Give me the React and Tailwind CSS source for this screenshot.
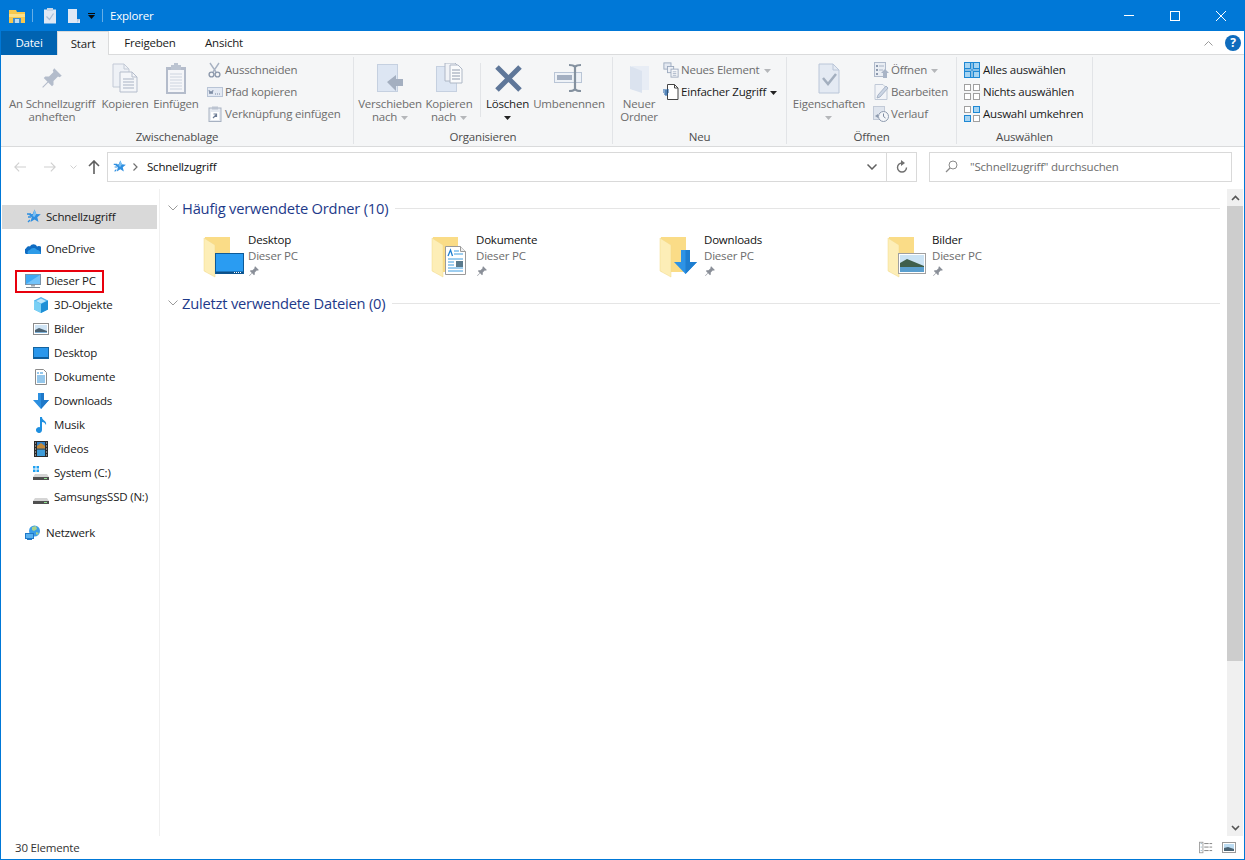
import React from "react";

const C = ({ w = 16, h = 16, vb, className = "", children }) => (
  <svg width={w} height={h} viewBox={vb || `0 0 ${w} ${h}`} className={`shrink-0 ${className}`}>{children}</svg>
);

const Caret = ({ dark, bare }) => (
  <svg width="7" height="4" viewBox="0 0 7 4" className={`inline-block align-middle ${bare ? "" : "ml-1"}`}><path d="M0 0h7L3.500 4z" fill={dark ? "#222" : "#b5b7ba"} /></svg>
);

const Pin = ({ s = 32, c = "#b3bccb", className = "" }) => (
  <svg width={s} height={s} viewBox="0 0 32 32" className={`shrink-0 ${className}`}>
    <path d="M19 3l10 10-3 2-2-1-6 6 0 5-2 2-5-5-7 7-1-1 7-7-5-5 2-2 5 0 6-6-1-2z" fill={c} />
  </svg>
);

const CopyIcon = () => (
  <C w={32} h={32}>
    <path d="M4 1h11l5 5v18H4z" fill="#eef1f6" stroke="#c3cad6" />
    <path d="M15 1v5h5" fill="none" stroke="#c3cad6" />
    <path d="M11 9h12l5 5v15H11z" fill="#f4f6f9" stroke="#b5bdcc" />
    <path d="M23 9v5h5" fill="none" stroke="#b5bdcc" />
    <path d="M14 16h11M14 19h11M14 22h11M14 25h11" stroke="#a9b3c4" />
  </C>
);

const PasteIcon = () => (
  <C w={32} h={32}>
    <rect x="6" y="4" width="20" height="27" fill="#b4bccb" />
    <rect x="8" y="7" width="16" height="22" fill="#f5f6f9" />
    <rect x="11" y="2" width="10" height="5" fill="#bcc4d1" />
    <rect x="14" y="0" width="4" height="3" fill="#bcc4d1" />
    <path d="M10 11h12M10 14h12M10 17h12M10 20h12M10 23h12M10 26h12" stroke="#cdd4df" />
  </C>
);

const Scissors = () => (
  <C>
    <path d="M3 1l6 9M12 1l-6 9" stroke="#a8b2c2" strokeWidth="1.400" fill="none" />
    <circle cx="4.500" cy="12.500" r="2.400" fill="none" stroke="#8d99ac" strokeWidth="1.400" />
    <circle cx="10.500" cy="12.500" r="2.400" fill="none" stroke="#8d99ac" strokeWidth="1.400" />
  </C>
);

const PathIcon = () => (
  <C>
    <rect x="0.500" y="3.500" width="15" height="9" fill="#e3e9f3" stroke="#b8c4d6" />
    <path d="M2 6l1 4 1-3 1 3 1-4" stroke="#7c8ba3" fill="none" />
    <path d="M8 10h1M10 10h1M12 10h1" stroke="#7c8ba3" />
  </C>
);

const ShortcutIcon = () => (
  <C>
    <rect x="2" y="2" width="12" height="13.500" fill="#e6eaf1" stroke="#a7b1c1" />
    <rect x="5" y="0.500" width="6" height="3" fill="#bcc4d1" />
    <rect x="4" y="6" width="8" height="8" fill="#fff" />
    <path d="M6 12l3-3M6.500 8h3v3" stroke="#6d7c95" strokeWidth="1.200" fill="none" />
  </C>
);

const MoveIcon = () => (
  <C w={32} h={32}>
    <rect x="3.500" y="1.500" width="20" height="27" fill="#dde6f3" stroke="#c5d0e0" />
    <path d="M13 19l9-7v4h7v7h-7v5z" fill="#a4afc0" />
  </C>
);

const CopyToIcon = () => (
  <C w={32} h={32}>
    <rect x="3.500" y="3.500" width="20" height="25" fill="#dde6f3" stroke="#c5d0e0" />
    <path d="M12 0h10l5 5v13H12z" fill="#f1f3f7" stroke="#aeb7c6" />
    <path d="M17 2h8l4 4v14H17z" fill="#fafbfc" stroke="#aeb7c6" />
    <path d="M19 7h8M19 10h8M19 13h8M19 16h8" stroke="#8f9aad" />
  </C>
);

const DeleteX = () => (
  <C w={32} h={32}>
    <path d="M5 4l23 23M28 4L5 27" stroke="#5f7799" strokeWidth="5" fill="none" />
  </C>
);

const RenameIcon = () => (
  <C w={32} h={32}>
    <rect x="1.500" y="9.500" width="27" height="10" fill="#eef2f7" stroke="#b9c5d6" />
    <rect x="4" y="12" width="15" height="5" fill="#a3afc1" />
    <path d="M16 2c5 0 5 1 6 2 1-1 1-2 6-2M22 4v22M16 28c5 0 5-1 6-2 1 1 1 2 6 2" stroke="#84919f" strokeWidth="2.200" fill="none" />
  </C>
);

const NewFolderIcon = () => (
  <C w={32} h={32}>
    <path d="M9 3h17v24H9z" fill="#e8edf5" />
    <path d="M7 3l12 5v22L7 26z" fill="#dbe3ef" />
  </C>
);

const NewItemIcon = () => (
  <C vb="0 0 18 18">
    <rect x="1" y="1" width="8" height="7" fill="#e4e9f1" stroke="#9aa8bd" />
    <rect x="5" y="5" width="7" height="7" fill="#eef1f6" stroke="#9aa8bd" />
    <rect x="9" y="8" width="8" height="9" fill="#f7f8fa" stroke="#9aa8bd" />
    <path d="M11 11h4M11 13h4M11 15h4" stroke="#a9b5c7" />
  </C>
);

const EasyAccess = () => (
  <C>
    <path d="M4.500 0.500h7l3.500 3.500v11.500H4.500z" fill="#fff" stroke="#444" />
    <path d="M11.500 0.500V4H15" fill="none" stroke="#444" />
    <path d="M0 6h6M0 8h6M1 10h4" stroke="#1c5fa5" />
    <path d="M3 6v6" stroke="#1c5fa5" />
  </C>
);

const PropsIcon = () => (
  <C w={32} h={32}>
    <path d="M6 1h14l6 6v23H6z" fill="#e4eaf3" stroke="#bac6d8" />
    <path d="M20 1v6h6" fill="none" stroke="#bac6d8" />
    <path d="M10 15l5 6 8-10" stroke="#a3afbf" strokeWidth="2.500" fill="none" />
  </C>
);

const OpenIcon = () => (
  <C>
    <rect x="1.500" y="0.500" width="11" height="14" fill="#e9edf3" stroke="#b0bacb" />
    <path d="M3 3h2v2H3zM3 7h2v2H3zM3 11h2v2H3z" fill="#8c99ae" />
    <path d="M6 4h5M6 8h4" stroke="#a9b4c6" />
    <path d="M12 7l4 4h-2v5h-4v-5H8z" fill="#a9b4c6" />
  </C>
);

const EditIcon = () => (
  <C>
    <path d="M2 .5h8l4 4v11H2z" fill="#f2f4f8" stroke="#c0c9d7" />
    <path d="M4 14l1-3 8-9 2 2-8 9z" fill="#cbd5e4" stroke="#a9b5c7" />
  </C>
);

const HistoryIcon = () => (
  <C>
    <rect x="0.500" y="0.500" width="11" height="13" fill="#dfe5ee" stroke="#c2cad7" />
    <circle cx="10.500" cy="10.500" r="5" fill="#f4f6f9" stroke="#8d9aae" />
    <path d="M10.500 7.500v3l2 1.500" stroke="#7d8a9f" fill="none" />
    <path d="M2 10l3-2v4z" fill="#8d9aae" />
  </C>
);

const SelGrid = ({ mode }) => {
  const cells = mode === "all" ? [1, 1, 1, 1] : mode === "none" ? [0, 0, 0, 0] : [0, 1, 1, 0];
  return (
    <C>
      {cells.map((on, i) => {
        const x = i % 2 === 0 ? 0 : 9;
        const y = i < 2 ? 0 : 9;
        return <rect key={i} x={x + 0.5} y={y + 0.5} width="6" height="6" fill={on ? "#a6d4f2" : "#fff"} stroke={on ? "#1e88d4" : "#a0a0a0"} />;
      })}
      {mode === "all" && <path d="M0.500 0.500h15v15h-15zM8 0v16M0 8h16" fill="none" stroke="#1e88d4" />}
    </C>
  );
};

const QuickStar = ({ s = 16 }) => (
  <svg width={s} height={s} viewBox="0 0 16 16" className="shrink-0">
    <path d="M9.500 0.500l1.800 4.400 4.500.4-3.500 3 1.200 4.700-4-2.500-4 2.500 1.200-4.700-3.500-3 4.500-.4z" fill="#2f8fe0" />
    <path d="M9.500 0.500l1.800 4.400-1.800 3-2-1z" fill="#7cc0f2" />
    <path d="M2 5h4M3 8h3M5 11l-2 2" stroke="#2f8fe0" strokeWidth="1.400" />
  </svg>
);

const Cloud = () => (
  <C>
    <path d="M1 13a3 3 0 0 1 0-5.500C2 5 4 5 5 5.500 6.500 2.500 10.500 2.500 12 5.500a3.500 3.500 0 0 1 3.500 7.500z" fill="#0f6cc2" />
    <path d="M3 13a2.500 2.500 0 0 1 2-4c1-2 5-3 7 0 2 0 4 2 3.500 4z" fill="#2d9be8" />
  </C>
);

const Monitor = () => (
  <C>
    <rect x="0.500" y="1.500" width="15" height="10" fill="#3fa9f5" stroke="#7c93a8" />
    <path d="M1 11l14-9v9z" fill="#73c3fa" />
    <rect x="6" y="12" width="4" height="1.500" fill="#a0a8b0" />
    <rect x="1" y="14" width="14" height="1" fill="#7b8894" />
  </C>
);

const Cube = () => (
  <C>
    <path d="M8 0l7 3.500v9L8 16l-7-3.500v-9z" fill="#53b6ee" />
    <path d="M8 7l7-3.500v9L8 16z" fill="#1e8fd6" />
    <path d="M1 3.500L8 7l0 9-7-3.500z" fill="#7ad0f5" />
    <path d="M3 4l5-2.500L13 4 8 6.500z" fill="#bfe7fb" />
  </C>
);

const Picture = () => (
  <C>
    <rect x="0.500" y="2.500" width="15" height="11" fill="#fff" stroke="#8c8c8c" />
    <rect x="2" y="4" width="12" height="8" fill="#cfe4f5" />
    <path d="M2 9l4-2 8 3v2H2z" fill="#4b6272" />
    <rect x="2" y="11" width="12" height="1" fill="#7fb2d9" />
  </C>
);

const DesktopN = () => (
  <C>
    <rect x="0.500" y="2.500" width="15" height="11" fill="#2a97ec" stroke="#14639f" />
    <rect x="1" y="12" width="14" height="1.500" fill="#0d5a98" />
  </C>
);

const Doc = () => (
  <C>
    <path d="M2.500 .5h8l3 3v12h-11z" fill="#fff" stroke="#8c8c8c" />
    <path d="M4 4h2M7 4h3M4 7h8M4 9h8M4 11h8M4 13h8" stroke="#2a8fd8" />
  </C>
);

const DownArrow = ({ s = 16 }) => (
  <svg width={s} height={s} viewBox="0 0 16 16" className="shrink-0">
    <path d="M5 0h6v7h5l-8 9-8-9h5z" fill="#2b8fe0" />
    <path d="M8 0h3v7h5l-8 9z" fill="#1f78c8" />
  </svg>
);

const Music = () => (
  <C>
    <path d="M7 0h2c0 4 5 3 4 8-1-2-2-3-4-3v8a3 3 0 1 1-2-2.800z" fill="#1e8fe0" />
  </C>
);

const Video = () => (
  <C>
    <rect x="1" y="0" width="14" height="16" fill="#2a2a2a" />
    <rect x="4" y="1" width="8" height="6.500" fill="#2f80c9" />
    <rect x="4" y="8.500" width="8" height="6.500" fill="#3d9bd8" />
    <path d="M4 5l4-3 4 3v2.500H4z" fill="#c48a3a" />
    <path d="M2 2h1M2 5h1M2 8h1M2 11h1M2 14h1M13 2h1M13 5h1M13 8h1M13 11h1M13 14h1" stroke="#ddd" />
  </C>
);

const Drive = ({ win }) => (
  <C>
    {win && <path d="M0 1h2.500v2.500H0zM3.500 1H6v2.500H3.500zM0 4.500h2.500V7H0zM3.500 4.500H6V7H3.500z" fill="#21a1f1" />}
    <path d="M2 9h12l2 3H0z" fill="#d5d5d5" />
    <rect x="0" y="12" width="16" height="3" fill="#505050" />
    <rect x="11" y="13" width="3" height="1" fill="#8fe08f" />
  </C>
);

const Network = () => (
  <C>
    <circle cx="9.500" cy="6" r="5.500" fill="#3b9ee8" />
    <path d="M7 2l4-1 1 3-3 2-2-1zM11 7l3 1-2 2-1-1z" fill="#a8d18d" />
    <rect x="0.500" y="8.500" width="8" height="5" fill="#5ab2f0" stroke="#1f78c8" />
    <rect x="2" y="14" width="5" height="1" fill="#1f78c8" />
  </C>
);

const Chevron = ({ cls = "", c = "#9a9a9a", sw = 1 }) => (
  <svg width="10" height="6" viewBox="0 0 10 6" className={`shrink-0 ${cls}`}><path d="M0.500 0.500L5 5l4.500-4.500" fill="none" stroke={c} strokeWidth={sw} /></svg>
);

const Folder = ({ overlay }) => (
  <svg width="48" height="48" viewBox="0 0 48 48" className="shrink-0 mt-[1px] -mr-[6px]">
    <rect x="3" y="2" width="25" height="35" fill="#fadc87" />
    <path d="M2 3l11 7v32L2 36z" fill="#fdeeb7" />
    <path d="M13 10L2 3v33l11 6z" fill="none" stroke="#f1d889" strokeWidth="0.500" />
    {overlay === "desktop" && (
      <g>
        <rect x="13.500" y="18.500" width="28" height="20" fill="#2a9cf2" stroke="#0d5a98" />
        <rect x="14" y="36.500" width="27" height="2" fill="#0d4f86" />
        <path d="M32 37.500h8" stroke="#fff" strokeDasharray="1 1" />
      </g>
    )}
    {overlay === "docs" && (
      <g>
        <path d="M15.500 11.500h15l5 5v23h-20z" fill="#fff" stroke="#9a9a9a" />
        <path d="M30.500 11.500v5h5" fill="#eee" stroke="#9a9a9a" />
        <path d="M18 21l2.500-6 2 6" stroke="#1d7fd1" strokeWidth="1.300" fill="none" />
        <path d="M24 16h5M24 19h9M18 24h15M18 27h6M18 30h6M18 33h15M18 36h15" stroke="#3d9ce0" />
        <rect x="26" y="26" width="7" height="6" fill="#5a7a8c" />
      </g>
    )}
    {overlay === "down" && (
      <g>
        <path d="M23 15h9v12h7L27.500 39 16 27h7z" fill="#2d93e6" />
        <path d="M27.500 15H32v12h7L27.500 39z" fill="#1e7ed0" />
      </g>
    )}
    {overlay === "pics" && (
      <g>
        <rect x="12.500" y="18.500" width="27" height="20" fill="#fff" stroke="#a0a0a0" />
        <rect x="14" y="20" width="24" height="17" fill="#cbe3f4" />
        <path d="M14 28l7-4 17 7v6H14z" fill="#3f5f4c" />
        <rect x="14" y="32" width="24" height="5" fill="#5a9fce" />
      </g>
    )}
  </svg>
);

const Big = ({ w, icon, lines, off = true, caret }) => (
  <div className="flex flex-col items-center shrink-0" style={{ width: w }}>
    <div className="h-[35px] flex items-start justify-center pt-[6px]">{icon}</div>
    <div className={`mt-[5px] text-center leading-[13px] whitespace-nowrap ${off ? "text-[#6d6d6d]" : "text-[#1a1a1a]"}`}>
      {lines.map((l, i) => (
        <div key={i}>{l}{caret && i === lines.length - 1 && <Caret dark={!off} />}</div>
      ))}
    </div>
  </div>
);

const Small = ({ icon, label, off = true, caret }) => (
  <div className="h-[22px] flex items-center gap-[2px] whitespace-nowrap">
    <span className="w-[16px] flex justify-center">{icon}</span>
    <span className={off ? "text-[#6d6d6d]" : "text-[#1a1a1a]"}>{label}{caret && <Caret dark={!off} />}</span>
  </div>
);

const Group = ({ w, label, children }) => (
  <div className="flex flex-col shrink-0 my-[2px] border-r border-[#e2e4e7]" style={{ width: w }}>
    <div className="h-[71px] flex">{children}</div>
    <div className="text-center text-[#4d4d4d] leading-[13px] mt-[2px]">{label}</div>
  </div>
);

const NavRow = ({ icon, label, sub, sel, cls = "" }) => (
  <div className={`h-[24px] flex items-center ${sub ? "pl-[31px]" : "pl-[23px]"} gap-[5px] text-[#1a1a1a] ${sel ? "bg-[#d9d9d9]" : ""} ${cls}`}>
    {icon}
    <span className="whitespace-nowrap">{label}</span>
  </div>
);

const Tile = ({ overlay, name }) => (
  <div className="w-[228px] flex gap-[4px] pl-[2px]">
    <Folder overlay={overlay} />
    <div className="leading-[16px] -mt-[2px]">
      <div className="text-[#111]">{name}</div>
      <div className="text-[#6d6d6d]">Dieser PC</div>
      <div className="h-[14px] flex items-center"><Pin s={12} c="#8a8f98" /></div>
    </div>
  </div>
);

const GroupHead = ({ title }) => (
  <div className="flex items-center h-[20px] pl-[8px]">
    <Chevron cls="mr-[4px]" />
    <span className="text-[14.7px] text-[#1e3a8a] whitespace-nowrap">{title}</span>
    <div className="flex-1 h-px bg-[#e5e5e5] ml-[7px]" />
  </div>
);

const Ink = ({ children }) => <span className="text-[#1a1a1a]">{children}</span>;

export default function App() {
  return (
    <div className="w-[1245px] h-[860px] flex flex-col bg-white border-x border-b border-[#0078d7] overflow-hidden text-[11.5px] tracking-[-0.2px] font-['Open_Sans','Noto_Sans',sans-serif]">
      {/* title bar */}
      <div className="h-[31px] -mx-px bg-[#0078d7] flex items-center shrink-0 text-white">
        <div className="flex items-center pl-[8px] gap-[5px] h-full">
          <svg width="18" height="16" viewBox="0 0 18 16" className="shrink-0">
            <path d="M1 2h7l1 2h8v11H1z" fill="#f6c84e" />
            <rect x="1" y="6" width="16" height="3" fill="#fbe08a" />
            <rect x="5" y="10" width="8" height="5" fill="#3f8ed0" />
            <rect x="7" y="11" width="4" height="4" fill="#bcdcf2" />
          </svg>
          <div className="w-px h-[13px] bg-[#66aee7] ml-[1px]" />
          <svg width="14" height="16" viewBox="0 0 14 16" className="ml-[5px] shrink-0">
            <rect x="1" y="1.500" width="12" height="14" fill="#dfe8f4" />
            <rect x="4" y="0" width="6" height="3" fill="#c8d6e8" />
            <path d="M3.500 8.500l3 3 4-6" stroke="#a9bdd6" strokeWidth="1.200" fill="none" />
          </svg>
          <svg width="14" height="16" viewBox="0 0 14 16" className="ml-[5px] shrink-0">
            <path d="M1 1h9v10h3v4H1z" fill="#dfe8f5" />
            <path d="M10 11h3l-3 4z" fill="#b8cde6" />
          </svg>
          <svg width="7" height="6" viewBox="0 0 7 6" className="ml-[2px] shrink-0">
            <path d="M0 0h7v1H0zM0 2h7L3.500 6z" fill="#0a0a0a" />
          </svg>
          <div className="w-px h-[13px] bg-[#66aee7] ml-[2px]" />
          <span className="ml-[2px]">Explorer</span>
        </div>
        <div className="ml-auto flex h-full pr-px">
          <div className="w-[46px] flex items-center justify-center"><div className="w-[10px] h-px bg-white" /></div>
          <div className="w-[46px] flex items-center justify-center"><div className="w-[10px] h-[10px] border border-white" /></div>
          <div className="w-[46px] flex items-center justify-center">
            <svg width="10" height="10" viewBox="0 0 10 10"><path d="M0 0l10 10M10 0L0 10" stroke="#fff" /></svg>
          </div>
        </div>
      </div>

      {/* tabs */}
      <div className="h-[24px] flex shrink-0 border-b border-[#dadbdc] text-[#1a1a1a]">
        <div className="w-[56px] h-[24px] bg-[#0063b1] text-white flex items-center justify-center">Datei</div>
        <div className="w-[52px] h-[24px] bg-[#f5f6f7] border-x border-t border-[#dadbdc] flex items-center justify-center">Start</div>
        <div className="w-[68px] flex items-center justify-center ml-[7px]">Freigeben</div>
        <div className="w-[54px] flex items-center justify-center ml-[13px]">Ansicht</div>
        <div className="ml-auto flex items-center pr-[3px] gap-[12px]">
          <svg width="9" height="6" viewBox="0 0 9 6"><path d="M0.500 5.500L4.500 1.500l4 4" fill="none" stroke="#9a9a9a" /></svg>
          <div className="w-[16px] h-[16px] rounded-full bg-[#0f6cbd] text-white font-bold text-[12px] flex items-center justify-center leading-none">?</div>
        </div>
      </div>

      {/* ribbon */}
      <div className="h-[92px] bg-[#f5f6f7] border-b border-[#dadbdc] flex shrink-0">
        <Group w={353} label="Zwischenablage">
          <div className="w-[4px]" />
          <Big w={94} icon={<Pin s={24} className="mt-[3px]" />} lines={["An Schnellzugriff", "anheften"]} />
          <Big w={52} icon={<CopyIcon />} lines={["Kopieren"]} />
          <Big w={50} icon={<PasteIcon />} lines={["Einfügen"]} />
          <div className="flex flex-col ml-[6px] pt-[2px]">
            <Small icon={<Scissors />} label="Ausschneiden" />
            <Small icon={<PathIcon />} label="Pfad kopieren" />
            <Small icon={<ShortcutIcon />} label="Verknüpfung einfügen" />
          </div>
        </Group>
        <Group w={259} label="Organisieren">
          <div className="w-[6px]" />
          <Big w={60} icon={<MoveIcon />} lines={["Verschieben", "nach"]} caret />
          <Big w={58} icon={<CopyToIcon />} lines={["Kopieren", "nach"]} caret />
          <div className="w-px h-[54px] bg-[#e2e4e7] mt-[6px] ml-[2px]" />
          <Big w={53} off={false} icon={<DeleteX />} lines={["Löschen", <Caret key="c" dark bare />]} />
          <Big w={70} icon={<RenameIcon />} lines={["Umbenennen"]} />
        </Group>
        <Group w={174} label="Neu">
          <div className="w-[3px]" />
          <Big w={46} icon={<NewFolderIcon />} lines={["Neuer", "Ordner"]} />
          <div className="flex flex-col pt-[2px] ml-px">
            <Small icon={<NewItemIcon />} label="Neues Element" caret />
            <Small icon={<EasyAccess />} label="Einfacher Zugriff" off={false} caret />
          </div>
        </Group>
        <Group w={170} label="Öffnen">
          <div className="w-[4px]" />
          <Big w={76} icon={<PropsIcon />} lines={["Eigenschaften", <Caret key="c" bare />]} />
          <div className="flex flex-col pt-[2px] ml-[6px]">
            <Small icon={<OpenIcon />} label="Öffnen" caret />
            <Small icon={<EditIcon />} label="Bearbeiten" />
            <Small icon={<HistoryIcon />} label="Verlauf" />
          </div>
        </Group>
        <Group w={136} label="Auswählen">
          <div className="flex flex-col pt-[2px] ml-[7px]">
            <Small icon={<SelGrid mode="all" />} label={<Ink>&#8202;Alles auswählen</Ink>} />
            <Small icon={<SelGrid mode="none" />} label={<Ink>&#8202;Nichts auswählen</Ink>} />
            <Small icon={<SelGrid mode="inv" />} label={<Ink>&#8202;Auswahl umkehren</Ink>} />
          </div>
        </Group>
      </div>

      {/* address row */}
      <div className="h-[42px] flex items-center shrink-0 pb-[7px] pt-[4px]">
        <div className="w-[106px] flex items-center shrink-0 pl-[13px]">
          <svg width="12" height="12" viewBox="0 0 14 12"><path d="M6 1L1 6l5 5M1 6h13" fill="none" stroke="#d0d0d0" strokeWidth="1.300" /></svg>
          <svg width="12" height="12" viewBox="0 0 14 12" className="ml-[18px]"><path d="M8 1l5 5-5 5M13 6H0" fill="none" stroke="#d0d0d0" strokeWidth="1.300" /></svg>
          <svg width="7" height="4" viewBox="0 0 7 4" className="ml-[14px]"><path d="M0.500 0.500l3 3 3-3" fill="none" stroke="#d0d0d0" /></svg>
          <svg width="12" height="14" viewBox="0 0 12 14" className="ml-[11px]"><path d="M1 6l5-5 5 5M6 1v13" fill="none" stroke="#5f5f5f" strokeWidth="1.600" /></svg>
        </div>
        <div className="w-[810px] h-[30px] border border-[#d9d9d9] flex items-center shrink-0">
          <div className="flex items-center flex-1 pl-[4px] gap-[4px]">
            <QuickStar s={14} />
            <svg width="5" height="8" viewBox="0 0 5 8" className="ml-[3px]"><path d="M0.500 0.500L4 4 .5 7.500" fill="none" stroke="#707070" strokeWidth="1.200" /></svg>
            <span className="ml-[5px] text-[#111]">Schnellzugriff</span>
          </div>
          <Chevron cls="mr-[9px]" c="#606060" sw={1.500} />
          <div className="w-[30px] h-full border-l border-[#d9d9d9] flex items-center justify-center">
            <svg width="12" height="13" viewBox="0 0 12 13"><path d="M6 3a4.500 4.500 0 1 0 4.500 4.500" fill="none" stroke="#707070" strokeWidth="1.400" /><path d="M5 0l4 3-4 3z" fill="#707070" /></svg>
          </div>
        </div>
        <div className="w-[303px] h-[30px] ml-[12px] border border-[#d9d9d9] flex items-center shrink-0 pl-[15px] text-[#6d6d6d]">
          <svg width="13" height="13" viewBox="0 0 13 13"><circle cx="8" cy="5" r="4" fill="none" stroke="#8a8a8a" /><path d="M5 8l-4 4" stroke="#8a8a8a" strokeWidth="1.200" /></svg>
          <span className="ml-[12px]">"Schnellzugriff" durchsuchen</span>
        </div>
      </div>

      {/* body */}
      <div className="flex-1 flex min-h-0">
        <nav className="w-[159px] border-r border-[#f0f0f0] shrink-0 pt-[16px] pl-px">
          <div className="w-[155px]">
            <NavRow sel icon={<QuickStar />} label="Schnellzugriff" />
            <NavRow cls="mt-[8px]" icon={<Cloud />} label="OneDrive" />
            <div className="relative mt-[8px]">
              <NavRow icon={<Monitor />} label="Dieser PC" />
              <div className="absolute left-[13px] top-[1px] w-[89px] h-[23px] border-2 border-[#e8000d]" />
            </div>
            <NavRow sub icon={<Cube />} label="3D-Objekte" />
            <NavRow sub icon={<Picture />} label="Bilder" />
            <NavRow sub icon={<DesktopN />} label="Desktop" />
            <NavRow sub icon={<Doc />} label="Dokumente" />
            <NavRow sub icon={<DownArrow />} label="Downloads" />
            <NavRow sub icon={<Music />} label="Musik" />
            <NavRow sub icon={<Video />} label="Videos" />
            <NavRow sub icon={<Drive win />} label="System (C:)" />
            <NavRow sub icon={<Drive />} label="SamsungsSSD (N:)" />
            <NavRow cls="mt-[12px]" icon={<Network />} label="Netzwerk" />
          </div>
        </nav>
        <main className="flex-1 flex min-w-0 min-h-0">
          <div className="flex-1 min-w-0 pt-[9px] pr-[7px]">
            <GroupHead title="Häufig verwendete Ordner (10)" />
            <div className="flex pl-[40px] mt-[16px] h-[50px]">
              <Tile overlay="desktop" name="Desktop" />
              <Tile overlay="docs" name="Dokumente" />
              <Tile overlay="down" name="Downloads" />
              <Tile overlay="pics" name="Bilder" />
            </div>
            <div className="mt-[9px]"><GroupHead title="Zuletzt verwendete Dateien (0)" /></div>
          </div>
          <div className="w-[16px] bg-[#f0f0f0] flex flex-col items-center shrink-0 mr-px">
            <div className="h-[17px] flex items-center justify-center shrink-0">
              <svg width="9" height="6" viewBox="0 0 9 6"><path d="M1 5l3.500-3.500L8 5" fill="none" stroke="#555" strokeWidth="1.600" /></svg>
            </div>
            <div className="w-full h-[455px] bg-[#cdcdcd] shrink-0" />
            <div className="flex-1" />
            <div className="h-[17px] flex items-center justify-center shrink-0">
              <svg width="9" height="6" viewBox="0 0 9 6"><path d="M1 1l3.500 3.500L8 1" fill="none" stroke="#555" strokeWidth="1.600" /></svg>
            </div>
          </div>
        </main>
      </div>

      {/* status */}
      <div className="h-[23px] flex items-center shrink-0 pl-[14px] pr-[8px] text-[#333]">
        <span>30 Elemente</span>
        <div className="ml-auto flex items-center gap-[9px]">
          <svg width="14" height="13" viewBox="0 0 16 13">
            <rect x="0.500" y="0.500" width="4" height="12" fill="#fff" stroke="#9a9a9a" />
            <path d="M2 2h1M2 6h1M2 10h1" stroke="#5a8aa8" />
            <path d="M6 2h5M12 2h3M6 6h5M12 6h3M6 10h5M12 10h3" stroke="#777" />
          </svg>
          <svg width="14" height="11" viewBox="0 0 14 11">
            <rect x="0.500" y="0.500" width="13" height="10" fill="#fff" stroke="#9a9a9a" />
            <rect x="2" y="2" width="10" height="7" fill="#bcdcf2" />
            <path d="M2 6l4-1 6 2v2H2z" fill="#4a6272" />
          </svg>
        </div>
      </div>
    </div>
  );
}
